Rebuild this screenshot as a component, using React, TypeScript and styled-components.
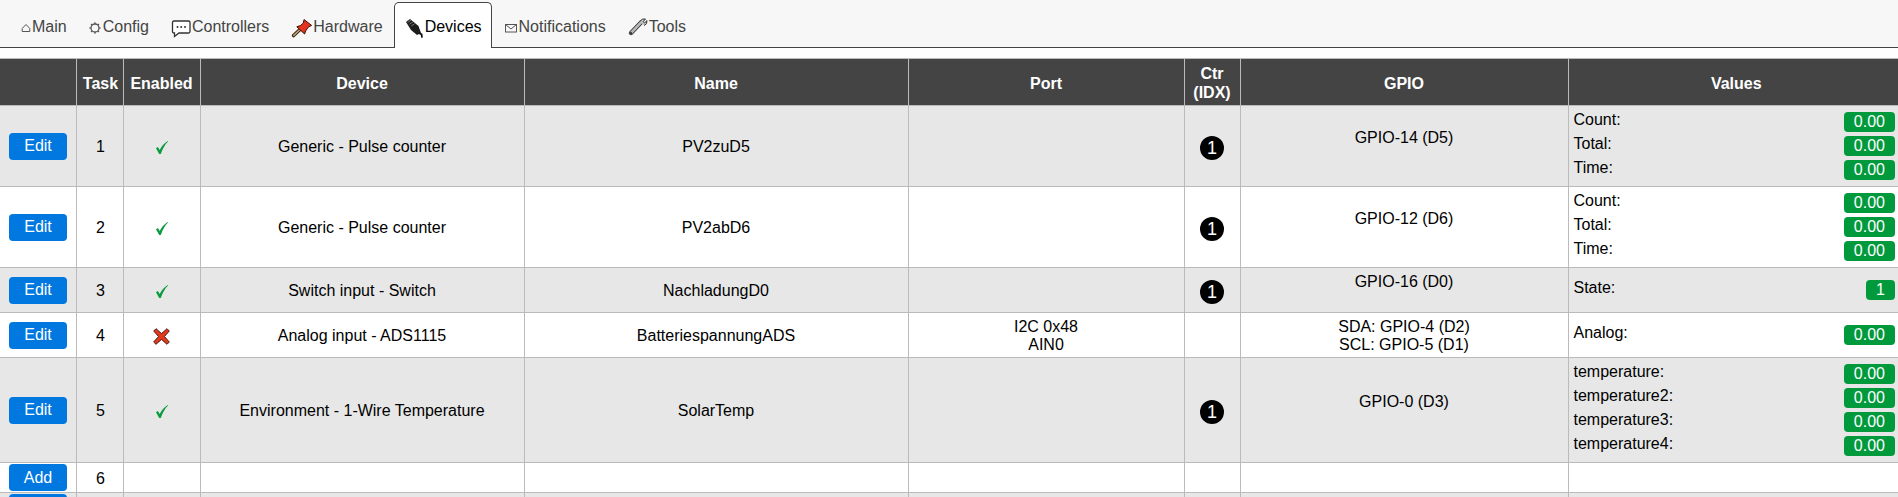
import React from "react"
import styled, { createGlobalStyle } from "styled-components"

const GlobalStyle = createGlobalStyle`
	html, body {
		margin: 0;
		padding: 0;
		height: 100%;
		overflow: hidden;
		background: #fff;
		font-family: "Liberation Sans", Arial, sans-serif;
		font-size: 16px;
	}
`

const HouseIcon = () => (
	<TabSvg width={10} viewBox="0 0 10 20">
		<path d="M5 6.5 L1.2 10.5 V13.5 H8.8 V10.5 Z" fill="none" stroke="#555" strokeWidth="1" />
	</TabSvg>
)

const GearIcon = () => (
	<TabSvg width={14} viewBox="0 0 14 20">
		<circle cx="7" cy="10" r="4" fill="none" stroke="#555" strokeWidth="1.3" />
		<path d="M7 4.2 V6 M7 14 V15.8 M1.2 10 H3 M11 10 H12.8 M3 6 L4.2 7.2 M9.8 12.8 L11 14 M11 6 L9.8 7.2 M4.2 12.8 L3 14" stroke="#555" strokeWidth="1.2" />
	</TabSvg>
)

const ChatIcon = () => (
	<TabSvg width={21} viewBox="-1 0 21 20">
		<path d="M3 3 H17.5 Q19 3 19 4.5 V13.5 Q19 15 17.5 15 H8 L3.5 18.5 V15 H3 Q1.5 15 1.5 13.5 V4.5 Q1.5 3 3 3 Z" fill="#fff" stroke="#333" strokeWidth="1.3" />
		<circle cx="6.5" cy="9" r="1" fill="#333" />
		<circle cx="10.2" cy="9" r="1" fill="#333" />
		<circle cx="14" cy="9" r="1" fill="#333" />
	</TabSvg>
)

const PinIcon = () => (
	<TabSvg width={22} viewBox="-2 0 22 20">
		<path d="M1.6 17.6 L8 11.5" stroke="#2a2018" strokeWidth="3.4" strokeLinecap="round" />
		<path d="M1.8 17.4 L8 11.5" stroke="#c9a26a" strokeWidth="1.6" strokeLinecap="round" />
		<path d="M12 1.6 L19.6 7.4 L16.4 9 L13.6 13 L12.6 16 L4.8 8.8 L8.4 7.6 L11.4 5 Z" fill="#e4341c" stroke="#3a1208" strokeWidth="1" strokeLinejoin="round" />
	</TabSvg>
)

const PlugIcon = () => (
	<TabSvg width={19} viewBox="0 0 19 20">
		<path d="M1 4 L5 1 L13.5 8 L16 15 L12 17 L6 12 Z" fill="#1c1c1c" />
		<path d="M2.6 4.4 L6 2.2 M4.4 6.2 L7.8 4 M6.2 8 L9.6 5.8" stroke="#8a8a8a" strokeWidth="0.8" />
		<path d="M14 15 L16.6 16.4 L17 19.6" fill="none" stroke="#111" strokeWidth="1.8" />
	</TabSvg>
)

const MailIcon = () => (
	<TabSvg width={14} viewBox="0 0 14 20">
		<rect x="1.5" y="6.5" width="11" height="7.5" fill="none" stroke="#555" strokeWidth="1" />
		<path d="M1.5 6.5 L7 11 L12.5 6.5" fill="none" stroke="#555" strokeWidth="1" />
	</TabSvg>
)

const WrenchIcon = () => (
	<TabSvg width={21} viewBox="-1 0 21 20">
		<path d="M3 15 L13.5 4" stroke="#333" strokeWidth="4.4" strokeLinecap="round" />
		<path d="M3 15 L13.5 4" stroke="#b8b8b8" strokeWidth="2.6" strokeLinecap="round" />
		<path d="M12.2 3.2 Q14 0.2 17.5 1 L15.2 3.6 L16.4 5 L19 2.6 Q19.4 6.4 16 7.6" fill="#c8c8c8" stroke="#333" strokeWidth="1" />
		<circle cx="3" cy="15.2" r="1.1" fill="#333" />
	</TabSvg>
)

const CheckMark = () => (
	<CheckSvg width="12" height="13" viewBox="0 0 12 13">
		<path d="M0 7.2 L1.9 6 L3.7 9 C5.4 5.6 8 2.4 11.6 0 L12 0.4 C8.8 3.6 6.4 8 4.8 13 H3.2 Z" fill="#0a9c3e" />
	</CheckSvg>
)

const CrossMark = () => (
	<CheckSvg width="17" height="17" viewBox="0 0 17 17">
		<path d="M3 0.7 L8.5 5.6 L14 0.7 L16.3 3 L11.4 8.5 L16.3 14 L14 16.3 L8.5 11.4 L3 16.3 L0.7 14 L5.6 8.5 L0.7 3 Z" fill="#e33a1e" stroke="#4a1a10" strokeWidth="1" strokeLinejoin="round" />
	</CheckSvg>
)

type Row = {
	task?: number
	action?: string
	enabled?: boolean
	device?: string
	name?: string
	port?: string[]
	ctr?: boolean
	gpio?: string[]
	values?: [string, string][]
}

const rows: Row[] = [
	{
		task: 1,
		action: "Edit",
		enabled: true,
		device: "Generic - Pulse counter",
		name: "PV2zuD5",
		ctr: true,
		gpio: ["GPIO-14 (D5)", "\u00a0"],
		values: [
			["Count:", "0.00"],
			["Total:", "0.00"],
			["Time:", "0.00"],
		],
	},
	{
		task: 2,
		action: "Edit",
		enabled: true,
		device: "Generic - Pulse counter",
		name: "PV2abD6",
		ctr: true,
		gpio: ["GPIO-12 (D6)", "\u00a0"],
		values: [
			["Count:", "0.00"],
			["Total:", "0.00"],
			["Time:", "0.00"],
		],
	},
	{
		task: 3,
		action: "Edit",
		enabled: true,
		device: "Switch input - Switch",
		name: "NachladungD0",
		ctr: true,
		gpio: ["GPIO-16 (D0)", "\u00a0"],
		values: [["State:", "1"]],
	},
	{
		task: 4,
		action: "Edit",
		enabled: false,
		device: "Analog input - ADS1115",
		name: "BatteriespannungADS",
		port: ["I2C 0x48", "AIN0"],
		gpio: ["SDA: GPIO-4 (D2)", "SCL: GPIO-5 (D1)"],
		values: [["Analog:", "0.00"]],
	},
	{
		task: 5,
		action: "Edit",
		enabled: true,
		device: "Environment - 1-Wire Temperature",
		name: "SolarTemp",
		ctr: true,
		gpio: ["GPIO-0 (D3)", "\u00a0"],
		values: [
			["temperature:", "0.00"],
			["temperature2:", "0.00"],
			["temperature3:", "0.00"],
			["temperature4:", "0.00"],
		],
	},
	{ task: 6, action: "Add" },
	// next row only shows the top of its button in the window
	{},
]

const tabs = [
	{ label: "Main", icon: <HouseIcon /> },
	{ label: "Config", icon: <GearIcon /> },
	{ label: "Controllers", icon: <ChatIcon /> },
	{ label: "Hardware", icon: <PinIcon /> },
	{ label: "Devices", icon: <PlugIcon />, active: true },
	{ label: "Notifications", icon: <MailIcon /> },
	{ label: "Tools", icon: <WrenchIcon /> },
]

const columns = [76, 47, 77, 324, 384, 276, 56, 328, 330]

const App = () => {
	return (
		<>
			<GlobalStyle />
			<TabBar>
				{tabs.map((tab) => (
					<Tab key={tab.label} $active={tab.active}>
						{tab.icon}
						{tab.label}
					</Tab>
				))}
			</TabBar>
			<DeviceTable>
				<colgroup>
					{columns.map((width, i) => (
						<col key={i} width={width} />
					))}
				</colgroup>
				<thead>
					<tr>
						<HeadCell></HeadCell>
						<HeadCell>Task</HeadCell>
						<HeadCell>Enabled</HeadCell>
						<HeadCell>Device</HeadCell>
						<HeadCell>Name</HeadCell>
						<HeadCell>Port</HeadCell>
						<HeadCell>
							Ctr
							<br />
							(IDX)
						</HeadCell>
						<HeadCell>GPIO</HeadCell>
						<HeadCell>Values</HeadCell>
					</tr>
				</thead>
				<tbody>
					{rows.map((row, i) => (
						<TableRow key={i}>
							<ButtonCell>
								<ActionButton>{row.action}</ActionButton>
							</ButtonCell>
							<Cell>{row.task}</Cell>
							<Cell>{row.device && (row.enabled ? <CheckMark /> : <CrossMark />)}</Cell>
							<Cell>{row.device}</Cell>
							<Cell>{row.name}</Cell>
							<Cell>
								{row.port?.map((line) => (
									<div key={line}>{line}</div>
								))}
							</Cell>
							<Cell>{row.ctr && <ControllerBadge>1</ControllerBadge>}</Cell>
							<Cell>
								{row.gpio?.map((line) => (
									<div key={line}>{line}</div>
								))}
							</Cell>
							<ValuesCell>
								{row.values?.map(([label, value]) => (
									<ValueRow key={label}>
										<span>{label}</span>
										<ValueBadge>{value}</ValueBadge>
									</ValueRow>
								))}
							</ValuesCell>
						</TableRow>
					))}
				</tbody>
			</DeviceTable>
		</>
	)
}

export default App

const TabBar = styled.nav`
	display: flex;
	height: 47px;
	padding-left: 11px;
	background: #f7f7f7;
	border-bottom: 1px solid #444;
	margin-bottom: 10px;
`

const Tab = styled.div<{ $active?: boolean }>`
	display: flex;
	align-items: center;
	box-sizing: border-box;
	height: ${({ $active }) => ($active ? "46px" : "47px")};
	margin: ${({ $active }) => ($active ? "2px 2px 0 0" : "0")};
	padding: ${({ $active }) => ($active ? "2px 9px 0 10px" : "6px 11px 0 10px")};
	color: ${({ $active }) => ($active ? "#000" : "#444")};
	background: ${({ $active }) => ($active ? "#fff" : "transparent")};
	border: ${({ $active }) => ($active ? "1px solid #444" : "none")};
	border-bottom: none;
	border-radius: 5px 5px 0 0;
	font-size: 16px;
	white-space: nowrap;
`

const TabSvg = styled.svg`
	height: 20px;
	margin-top: 3px;
	margin-right: 1px;
	flex: none;
`

const CheckSvg = styled.svg`
	display: block;
	margin: 1px auto 0;
`

const DeviceTable = styled.table`
	width: 1898px;
	table-layout: fixed;
	border-collapse: collapse;
	font-size: 16px;
	line-height: 18px;
	color: #000;
`

const HeadCell = styled.th`
	padding: 5px 4px 3px;
	height: 38px;
	background: #444;
	color: #fff;
	font-weight: bold;
	line-height: 19px;
	text-align: center;
	border: 1px solid #bbb;
	border-bottom: none;

	&:first-child {
		border-left: none;
	}

	&:nth-child(2) {
		padding-left: 6px;
	}

	&:last-child {
		padding-left: 10px;
		border-right: none;
	}
`

const TableRow = styled.tr`
	background: #fff;

	&:nth-child(odd) {
		background: #e7e7e7;
	}
`

const Cell = styled.td`
	padding: 5px 4px 3px;
	text-align: center;
	vertical-align: middle;
	border: 1px solid #bbb;

	&:first-child {
		border-left: none;
	}

	&:nth-child(2) {
		padding-left: 6px;
	}

	&:last-child {
		border-right: none;
	}
`

const ButtonCell = styled(Cell)`
	padding: 1px 9px;
`

const ValuesCell = styled(Cell)`
	padding-left: 5px;
	padding-right: 3px;
	text-align: left;
`

const ActionButton = styled.button`
	display: block;
	width: 58px;
	height: 27px;
	padding: 0;
	background: #0078e0;
	color: #fff;
	font-family: inherit;
	font-size: 16px;
	border: none;
	border-radius: 4px;
`

const ControllerBadge = styled.div`
	width: 24px;
	height: 24px;
	margin: 1px auto 0;
	border-radius: 50%;
	background: #000;
	color: #fff;
	font-size: 18px;
	line-height: 24px;
	text-align: center;
`

const ValueRow = styled.div`
	display: flex;
	justify-content: space-between;
	align-items: flex-start;
	height: 24px;
`

const ValueBadge = styled.span`
	box-sizing: border-box;
	height: 20px;
	margin-top: 1px;
	padding: 0 10px;
	background: #009a3d;
	color: #fff;
	font-size: 16px;
	line-height: 20px;
	border-radius: 4px;
`
